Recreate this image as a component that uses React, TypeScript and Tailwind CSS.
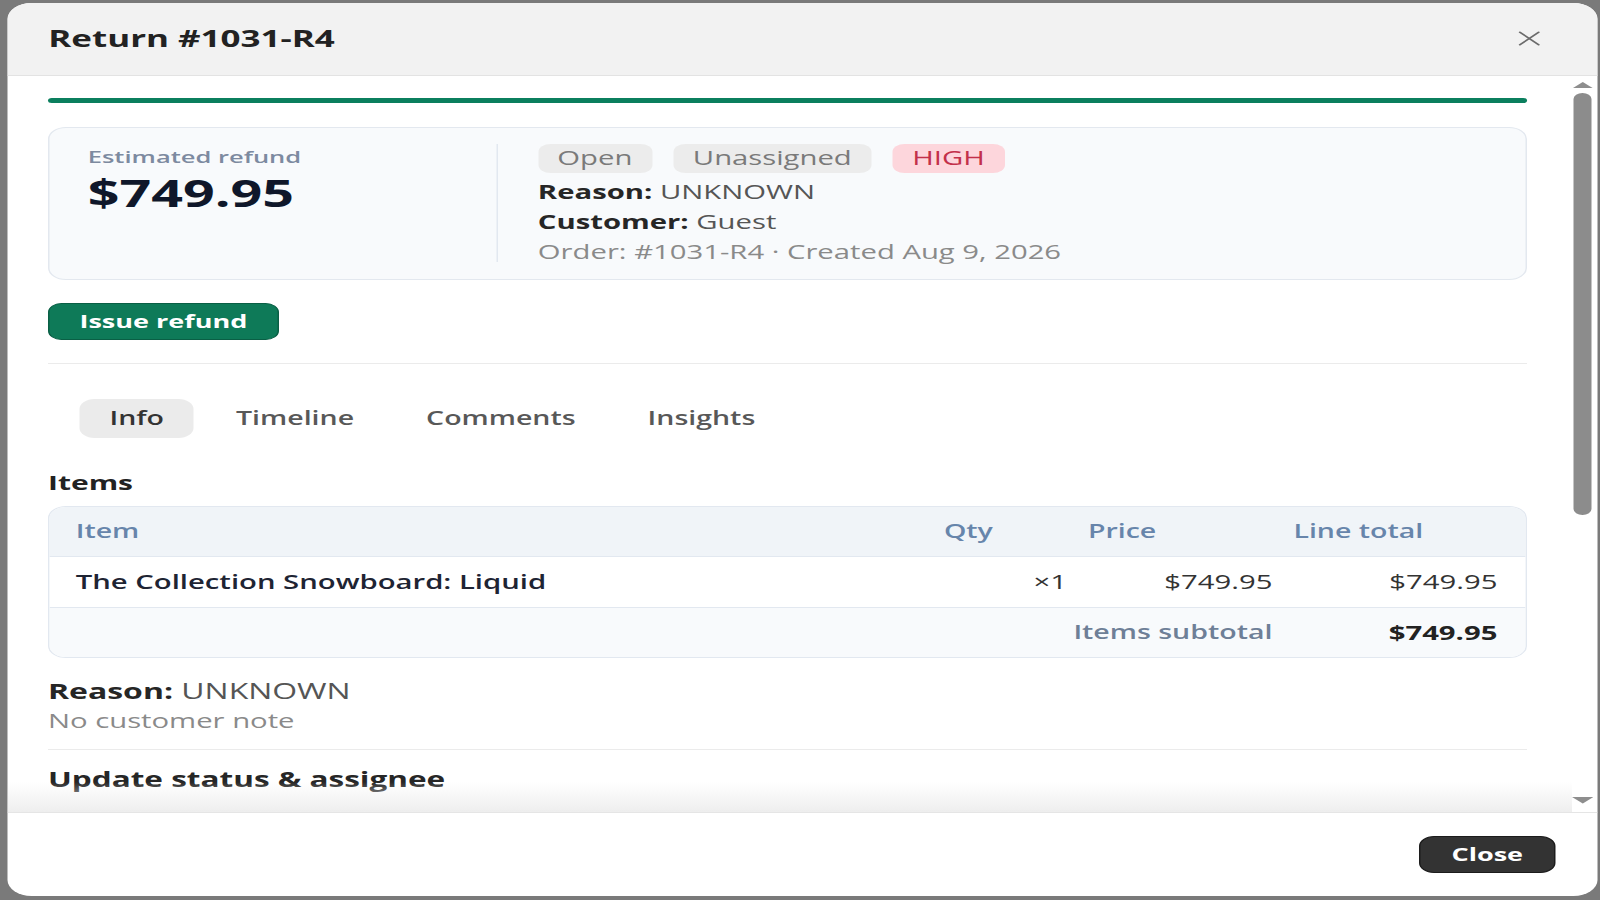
import { X } from "lucide-react";

const tabs = ["Info", "Timeline", "Comments", "Insights"];

function Badge({ label, tone }: { label: string; tone: "gray" | "red" }) {
  const cls =
    tone === "red"
      ? "bg-[#fdd6dc] text-[#c3304a]"
      : "bg-[#ececec] text-[#7a7a7a]";
  return (
    <span className={`h-[28.5px] px-[13px] rounded-lg text-[19.5px] leading-[28.5px] ${cls}`}>
      {label}
    </span>
  );
}

function ScrollArrow({ down }: { down?: boolean }) {
  return (
    <svg width="14.4" height="6.6" viewBox="0 0 14 7" preserveAspectRatio="none" className="block">
      <polygon points={down ? "0,0 14,0 7,7" : "0,7 14,7 7,0"} fill="#8e8e8e" />
    </svg>
  );
}

export default function App() {
  return (
    <div className="w-screen h-screen overflow-hidden bg-[#7a7a7a]">
      {/* the reference is horizontally stretched, so lay out narrow and scale */}
      <div className="w-[1066.67px] h-[900px] origin-top-left scale-x-150 flex pl-[4.7px] pr-[2px] pt-[3px] pb-[4px] font-['Open_Sans',sans-serif]">
        <div className="flex-1 flex flex-col bg-white rounded-2xl overflow-hidden">
          {/* header */}
          <div className="h-[72.5px] shrink-0 bg-[#f2f2f2] border-b border-[#e3e3e3] flex items-center justify-between pl-[27.5px] pr-[36px]">
            <h2 className="text-[23.3px] font-bold text-[#222]">Return #1031-R4</h2>
            <X size={25} strokeWidth={1.4} className="text-[#6b6b6b] -mr-[3px]" />
          </div>

          {/* body */}
          <div className="flex-1 min-h-0 flex">
            <div className="relative flex-1 overflow-hidden pl-[27.3px] pr-[29.5px] pt-[22.5px]">
              <div className="h-[5px] rounded-full bg-[#0b7f5e]" />

              {/* summary */}
              <div className="mt-[23.5px] h-[153px] flex items-start rounded-xl border border-[#e3e8ef] bg-[#f8fafc] pt-[16.5px]">
                <div className="w-[297.6px] pl-[25.5px] pt-px">
                  <div className="text-[17px] leading-[24px] font-semibold text-[#7d8aa0]">Estimated refund</div>
                  <div className="mt-[4px] text-[37px] leading-[40px] font-bold text-[#0f172a]">$749.95</div>
                </div>
                <div className="w-px h-[118px] bg-[#e2e8f0]" />
                <div className="flex-1 pl-[27px]">
                  <div className="flex gap-[14.3px]">
                    <Badge label="Open" tone="gray" />
                    <Badge label="Unassigned" tone="gray" />
                    <Badge label="HIGH" tone="red" />
                  </div>
                  <div className="mt-[4.5px] text-[19.5px] leading-[30px] text-[#555]">
                    <div>
                      <span className="font-bold text-[#262626]">Reason:</span> UNKNOWN
                    </div>
                    <div>
                      <span className="font-bold text-[#262626]">Customer:</span> Guest
                    </div>
                    <div className="text-[#8a8a8a]">Order: #1031-R4 · Created Aug 9, 2026</div>
                  </div>
                </div>
              </div>

              <button className="mt-[23.5px] h-[36.7px] px-5 rounded-[9px] border border-[#0a5f45] bg-[#0e7a58] text-[18px] font-bold text-white">
                Issue refund
              </button>

              <div className="mt-[23.5px] h-px bg-[#ebebeb]" />

              {/* tabs */}
              <div className="mt-[34.7px] ml-[21px] flex gap-2">
                {tabs.map((t, i) => (
                  <div
                    key={t}
                    className={`h-[38.8px] px-5 rounded-[10px] flex items-center text-[19px] font-semibold ${
                      i === 0 ? "bg-[#ebebeb] text-[#333]" : "text-[#585858]"
                    }`}
                  >
                    {t}
                  </div>
                ))}
              </div>

              <h3 className="mt-[30.9px] text-[20px] leading-[28px] font-bold text-[#222]">Items</h3>

              {/* items table */}
              <div className="mt-[9.3px] rounded-xl border border-[#e2e8f0] overflow-hidden text-[19.5px]">
                <div className="h-[50px] grid grid-cols-[1fr_96px_137px_150px] items-center pl-[10.5px] pr-3 bg-[#f0f4f8] border-b border-[#e2e8f0] text-[19px] font-semibold text-[#6785ab]">
                  <div className="px-[7px]">Item</div>
                  <div className="px-[7px]">Qty</div>
                  <div className="px-[7px]">Price</div>
                  <div className="px-[7px]">Line total</div>
                </div>
                <div className="h-[51px] grid grid-cols-[1fr_96px_137px_150px] items-center pl-[10.5px] pr-3 bg-white border-b border-[#e2e8f0] text-[#333]">
                  <div className="px-[7px] font-semibold text-[#1e2433]">The Collection Snowboard: Liquid</div>
                  <div className="px-[7px] text-right">×1</div>
                  <div className="px-[7px] text-right">$749.95</div>
                  <div className="px-[7px] text-right">$749.95</div>
                </div>
                <div className="h-[49px] grid grid-cols-[1fr_96px_137px_150px] items-center pl-[10.5px] pr-3 bg-[#f8fafc]">
                  <div className="col-span-3 px-[7px] text-right text-[19px] font-semibold text-[#6e7f97]">Items subtotal</div>
                  <div className="px-[7px] text-right font-bold text-[#222]">$749.95</div>
                </div>
              </div>

              <div className="mt-[17.8px] text-[21.3px] leading-[30px] text-[#555]">
                <span className="font-bold text-[#262626]">Reason:</span> UNKNOWN
              </div>
              <div className="mt-[1.6px] text-[19.5px] leading-[28px] text-[#8a8a8a]">No customer note</div>

              <div className="mt-[13.6px] h-px bg-[#ebebeb]" />

              <h3 className="mt-[14.6px] text-[21px] leading-[30px] font-bold text-[#262626]">Update status &amp; assignee</h3>
              <div className="mt-4 h-[44px] rounded-lg border border-[#e2e2e2]" />

              <div className="absolute left-0 right-0 bottom-0 h-[30px] bg-linear-to-b from-white/0 to-[#eeeeee]" />
            </div>

            {/* scrollbar */}
            <div className="w-[14.4px] mr-[2.5px] flex flex-col items-center pt-[6.2px] pb-[8.3px]">
              <ScrollArrow />
              <div className="mt-[5px] w-[12.7px] h-[422px] rounded-full bg-[#8c8c8c]" />
              <div className="flex-1" />
              <ScrollArrow down />
            </div>
          </div>

          {/* footer */}
          <div className="h-[83.7px] shrink-0 border-t border-[#e5e5e5] flex items-center justify-end pr-[27.3px]">
            <button className="h-[36.7px] px-[21px] rounded-[10px] border border-[#1c1c1c] bg-[#333] text-[18px] font-bold text-white">
              Close
            </button>
          </div>
        </div>
      </div>
    </div>
  );
}
